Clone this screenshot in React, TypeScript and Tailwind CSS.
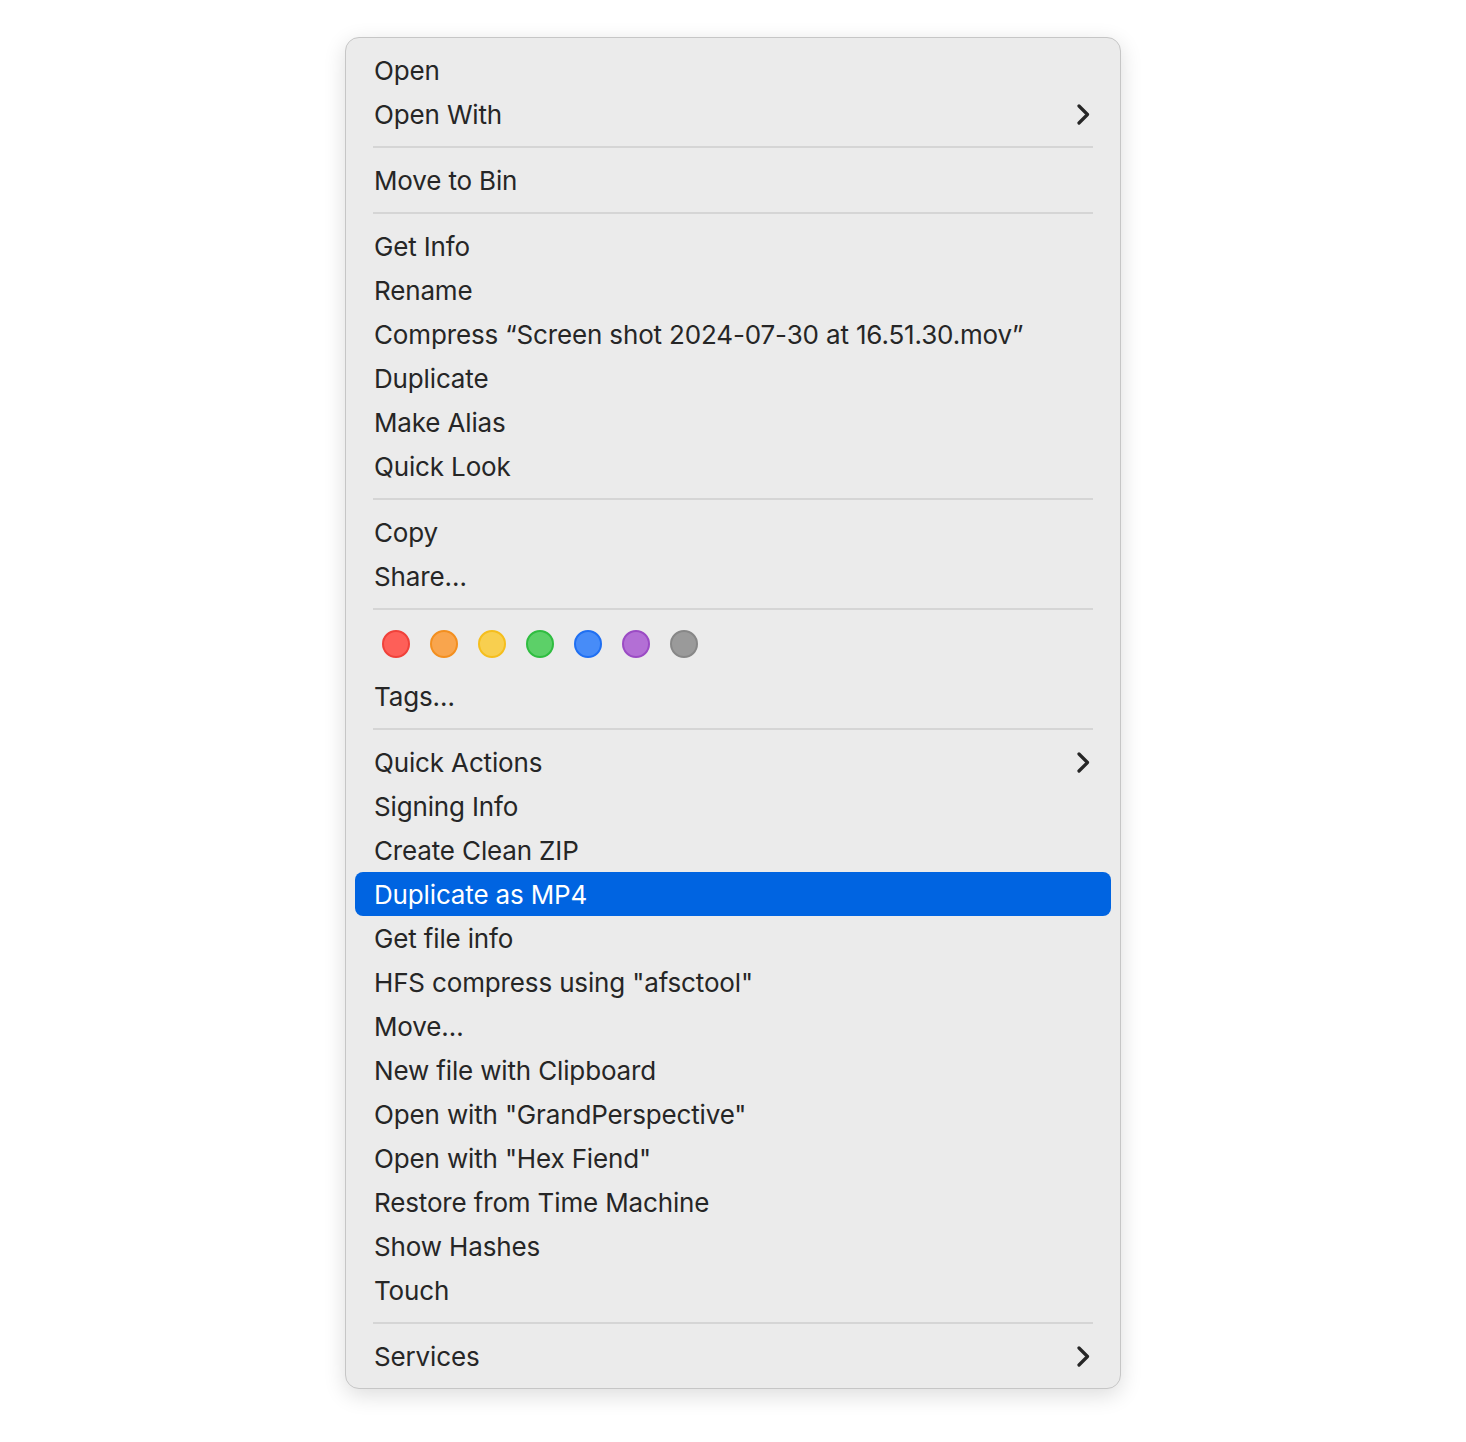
import React from 'react';

type Entry =
    | { kind: 'item'; label: string; sub?: boolean; active?: boolean }
    | { kind: 'sep' }
    | { kind: 'tags' };

const entries: Entry[] = [
    { kind: 'item', label: 'Open' },
    { kind: 'item', label: 'Open With', sub: true },
    { kind: 'sep' },
    { kind: 'item', label: 'Move to Bin' },
    { kind: 'sep' },
    { kind: 'item', label: 'Get Info' },
    { kind: 'item', label: 'Rename' },
    { kind: 'item', label: 'Compress \u201CScreen shot 2024-07-30 at 16.51.30.mov\u201D' },
    { kind: 'item', label: 'Duplicate' },
    { kind: 'item', label: 'Make Alias' },
    { kind: 'item', label: 'Quick Look' },
    { kind: 'sep' },
    { kind: 'item', label: 'Copy' },
    { kind: 'item', label: 'Share\u2026' },
    { kind: 'sep' },
    { kind: 'tags' },
    { kind: 'item', label: 'Tags\u2026' },
    { kind: 'sep' },
    { kind: 'item', label: 'Quick Actions', sub: true },
    { kind: 'item', label: 'Signing Info' },
    { kind: 'item', label: 'Create Clean ZIP' },
    { kind: 'item', label: 'Duplicate as MP4', active: true },
    { kind: 'item', label: 'Get file info' },
    { kind: 'item', label: 'HFS compress using "afsctool"' },
    { kind: 'item', label: 'Move\u2026' },
    { kind: 'item', label: 'New file with Clipboard' },
    { kind: 'item', label: 'Open with "GrandPerspective"' },
    { kind: 'item', label: 'Open with "Hex Fiend"' },
    { kind: 'item', label: 'Restore from Time Machine' },
    { kind: 'item', label: 'Show Hashes' },
    { kind: 'item', label: 'Touch' },
    { kind: 'sep' },
    { kind: 'item', label: 'Services', sub: true },
];

// fill / ring colours of the finder tag dots
const tagDots = [
    'bg-[#fe5f58] border-[#f0413a]',
    'bg-[#f9a54d] border-[#f38f1f]',
    'bg-[#f8cf4f] border-[#f5be1d]',
    'bg-[#5cd068] border-[#2fbd40]',
    'bg-[#478cf8] border-[#1f6ff2]',
    'bg-[#b36fd5] border-[#9b4bc4]',
    'bg-[#9a9a9a] border-[#878787]',
];

const Chevron = ({ light }: { light?: boolean }) => (
    <svg width="13" height="21" viewBox="0 0 13 21" fill="none">
        <polyline points="2,2 10.5,10.5 2,19" stroke={light ? '#fff' : '#262626'} strokeWidth="3.2" strokeLinecap="round" strokeLinejoin="round" />
    </svg>
);

export default function App() {
    return (
        <div className="min-h-[1442px] bg-white flex justify-center pt-[37px]" style={{ fontFamily: 'Inter, "Liberation Sans", sans-serif' }}>
            <div className="w-[776px] h-[1352px] bg-[#ebebeb] border border-[#c6c6c6] rounded-[14px] shadow-[0_6px_22px_rgba(0,0,0,0.14)] px-[9px] pt-[10px] flex flex-col">
                {entries.map((e, i) => {
                    if (e.kind === 'sep') {
                        return (
                            <div key={i} className="h-[22px] flex items-center px-[18px]">
                                <div className="h-[2px] w-full bg-[#d5d5d5]" />
                            </div>
                        );
                    }
                    if (e.kind === 'tags') {
                        return (
                            <div key={i} className="h-[54px] flex items-start gap-[20px] pl-[27px] pt-[10px]">
                                {tagDots.map((c, j) => (
                                    <span key={j} className={`w-[28px] h-[28px] rounded-full border-2 ${c}`} />
                                ))}
                            </div>
                        );
                    }
                    return (
                        <div
                            key={i}
                            className={`h-[44px] flex items-center justify-between pl-[19px] pr-[21px] rounded-[8px] ${e.active ? 'bg-[#0064e1] text-white' : 'text-[#262626]'}`}
                        >
                            <span className="text-[26px] leading-none pt-[2px] tracking-[-0.15px]">{e.label}</span>
                            {e.sub && <Chevron light={e.active} />}
                        </div>
                    );
                })}
            </div>
        </div>
    );
}
